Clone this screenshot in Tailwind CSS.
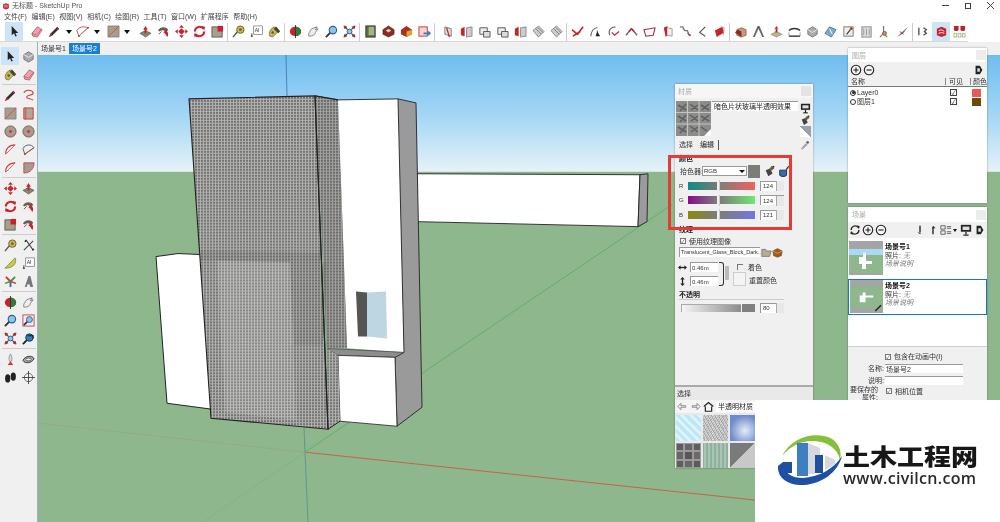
<!DOCTYPE html>
<html lang="zh">
<head>
<meta charset="utf-8">
<title>SketchUp Pro</title>
<script src="https://cdn.jsdelivr.net/npm/@tailwindcss/browser@4"></script>
</head>
<body class="bg-white">

<!-- icon set, every icon is drawn in a 14x14 box -->
<svg class="hidden" xmlns="http://www.w3.org/2000/svg">
  <symbol id="select" viewBox="0 0 14 14"><path d="M4 1v10l2.500-2 1.500 3.500 1.500-.7L8 8.500h3z" fill="#222"/></symbol>
  <symbol id="eraser" viewBox="0 0 14 14"><path d="M2 9l6-7 5 3-5 8-5-1z" fill="#eda2ae" stroke="#a8505f" stroke-width=".8"/><path d="M2 9l5 2 5-6" fill="none" stroke="#a8505f" stroke-width=".7"/></symbol>
  <symbol id="pencil" viewBox="0 0 14 14"><path d="M1 13l2-4 7-7 2 2-7 7z" fill="#333"/><path d="M1 13l2-4 2 2z" fill="#c22"/><path d="M9 3l2 2 1-1-2-2z" fill="#b33"/></symbol>
  <symbol id="arc" viewBox="0 0 14 14"><path d="M3 12L1 6c2-4 7-5 12-3z" fill="none" stroke="#b9505a" stroke-width="1"/><path d="M3 12l5-5 5-4" fill="none" stroke="#888" stroke-width=".8"/><circle cx="3" cy="12" r="1" fill="#d33"/><circle cx="13" cy="3" r="1" fill="#d33"/></symbol>
  <symbol id="arc2" viewBox="0 0 14 14"><path d="M2 12c-1-5 3-10 10-10" fill="none" stroke="#d3404a" stroke-width="1.200"/><path d="M2 12L12 2" stroke="#d3404a" stroke-width=".8"/></symbol>
  <symbol id="arc3" viewBox="0 0 14 14"><path d="M3 12L1 6c3-5 9-5 12-1z" fill="none" stroke="#2d6a68" stroke-width="1"/><path d="M3 12L13 5" stroke="#d3404a" stroke-width="1"/><circle cx="3" cy="12" r="1" fill="#d33"/></symbol>
  <symbol id="freehand" viewBox="0 0 14 14"><path d="M2 4c2-4 9-3 10 0 1 3-7 2-7 5 0 2 5 1 7 3" fill="none" stroke="#c8404a" stroke-width="1.200"/></symbol>
  <symbol id="pie" viewBox="0 0 14 14"><path d="M2 2h11c0 6-4 11-11 11z" fill="#a99a8c" stroke="#b9505a"/></symbol>
  <symbol id="rect" viewBox="0 0 14 14"><path d="M1 1h12v12H1z" fill="#a89c8d" stroke="#777" stroke-width=".7"/><path d="M1 13L13 1" stroke="#d3404a" stroke-width=".8"/></symbol>
  <symbol id="rect2" viewBox="0 0 14 14"><path d="M2 1h10v12H2z" fill="#b3a696" stroke="#c33" stroke-width="1"/><path d="M4 1v12" stroke="#c33" stroke-width=".7"/></symbol>
  <symbol id="circle" viewBox="0 0 14 14"><circle cx="7" cy="7" r="6" fill="#a99a8c" stroke="#6d5f52"/><circle cx="7" cy="7" r="1.500" fill="#c33"/></symbol>
  <symbol id="push" viewBox="0 0 14 14"><path d="M1 9l6-3 6 3-6 4z" fill="#7d8a70" stroke="#444" stroke-width=".6"/><path d="M7 9V4" stroke="#c22" stroke-width="2"/><path d="M4.500 5L7 1l2.500 4z" fill="#c22"/></symbol>
  <symbol id="follow" viewBox="0 0 14 14"><path d="M1 6c2-4 8-5 11-1l-2 3C8 5 5 5 3 7z" fill="#6b5b52"/><path d="M9 5c3 2 4 5 2 8-1-2-2-4-4-5z" fill="#c8232c"/><path d="M2 10l3-3" stroke="#c8232c"/></symbol>
  <symbol id="move" viewBox="0 0 14 14"><path d="M7 0l2.500 3h-5zM7 14l-2.500-3h5zM0 7l3-2.500v5zM14 7l-3-2.500v5z" fill="#d01e2a"/><rect x="4.500" y="4.500" width="5" height="5" fill="#d01e2a" transform="rotate(45 7 7)"/></symbol>
  <symbol id="rotate" viewBox="0 0 14 14"><path d="M2 7a5 5 0 0 1 9-3M12 7a5 5 0 0 1-9 3" fill="none" stroke="#d01e2a" stroke-width="2.200"/><path d="M9 1l4 1-1 4zM5 13l-4-1 1-4z" fill="#d01e2a"/></symbol>
  <symbol id="scale" viewBox="0 0 14 14"><rect x="1" y="2" width="11" height="11" fill="#a7a18c" stroke="#444" stroke-width=".8"/><rect x="7" y="1" width="6" height="6" fill="#d01e2a"/></symbol>
  <symbol id="tape" viewBox="0 0 14 14"><path d="M1 13l5-6" stroke="#555" stroke-width="1.500"/><circle cx="9" cy="5" r="4" fill="#c9b93c" stroke="#6c6a2a"/><circle cx="9" cy="5" r="1.500" fill="#7a4fa0"/></symbol>
  <symbol id="dim" viewBox="0 0 14 14"><path d="M2 12L12 2M5 2l7 10" stroke="#444" stroke-width="1.100"/><path d="M3 3l2-2M11 12l2-1" stroke="#222" stroke-width="1.500"/></symbol>
  <symbol id="protractor" viewBox="0 0 14 14"><path d="M1 12L12 1c2 5-1 11-11 11z" fill="#c7cc4e" stroke="#7d8030" stroke-width=".8"/></symbol>
  <symbol id="text" viewBox="0 0 14 14"><rect x="4" y="1" width="9.500" height="9" fill="#fff" stroke="#666" stroke-width=".7"/><path d="M2 9v4M1 12h2" stroke="#333"/><text x="5" y="8" font-size="5.500" fill="#333" font-family="Liberation Sans">AI</text></symbol>
  <symbol id="axes" viewBox="0 0 14 14"><path d="M7 7L2 2" stroke="#d33" stroke-width="2"/><path d="M7 7l5-5" stroke="#3a9a4a" stroke-width="2"/><path d="M7 7v6" stroke="#3566c8" stroke-width="2"/><path d="M7 7L1 9" stroke="#3a9a4a" stroke-width="1.500"/><path d="M7 7l6 2" stroke="#d33" stroke-width="1.500"/></symbol>
  <symbol id="text3d" viewBox="0 0 14 14"><path d="M3 13L7 1h2l3 12H9l-1-3H6l-1 3z" fill="#777"/></symbol>
  <symbol id="paint" viewBox="0 0 14 14"><path d="M2 12c-2-4 1-9 6-10l4 4-7 7z" fill="#c9b93c" stroke="#555" stroke-width=".7"/><path d="M6 4l5 5 2-2-4-5z" fill="#444"/><circle cx="5" cy="8" r="1.300" fill="#555"/></symbol>
  <symbol id="orbit" viewBox="0 0 14 14"><path d="M7 2c3 0 6 2 6 5s-3 5-6 5-6-2-6-5 3-5 6-5z" fill="#c4232b"/><path d="M7 2c3 0 6 2 6 5s-3 5-6 5z" fill="#2e7c3e"/><path d="M7 0v14" stroke="#333"/></symbol>
  <symbol id="pan" viewBox="0 0 14 14"><path d="M2 12c-1-3 1-5 3-8l6-2-2 3 3-1-3 4c0 2-2 4-7 4z" fill="#eee" stroke="#555" stroke-width=".7"/></symbol>
  <symbol id="zoom" viewBox="0 0 14 14"><path d="M1 13l5-5" stroke="#333" stroke-width="2"/><circle cx="8.500" cy="5.500" r="4" fill="#8fc5e8" stroke="#2f5f92" stroke-width="1.200"/></symbol>
  <symbol id="zoomwin" viewBox="0 0 14 14"><rect x="1" y="1" width="12" height="12" fill="none" stroke="#d3404a"/><path d="M2 12l4-4" stroke="#333" stroke-width="1.800"/><circle cx="8" cy="6" r="3.200" fill="#8fc5e8" stroke="#2f5f92"/></symbol>
  <symbol id="zoomext" viewBox="0 0 14 14"><path d="M1 1l3 1-2 2zM13 1l-1 3-2-2zM1 13l1-3 2 2zM13 13l-3-1 2-2z" fill="#c22" stroke="#c22"/><path d="M2 2l3 3M12 2L9 5M2 12l3-3M12 12L9 9" stroke="#444" stroke-width="1.300"/><circle cx="7" cy="7" r="2.600" fill="#8fc5e8" stroke="#2f5f92"/></symbol>
  <symbol id="prev" viewBox="0 0 14 14"><path d="M1 13l5-5" stroke="#222" stroke-width="2"/><circle cx="8" cy="6" r="4" fill="#2d80c0" stroke="#234"/><path d="M6 4h6v3" fill="none" stroke="#123" stroke-width="1.200"/></symbol>
  <symbol id="walk" viewBox="0 0 14 14"><ellipse cx="4" cy="8" rx="2.800" ry="4.500" fill="#222"/><ellipse cx="10" cy="6" rx="2.800" ry="4.500" fill="#222"/></symbol>
  <symbol id="look" viewBox="0 0 14 14"><circle cx="7" cy="7" r="4.500" fill="#f2f2f2" stroke="#666"/><path d="M7 0v14M0 7h14" stroke="#444"/></symbol>
  <symbol id="position" viewBox="0 0 14 14"><path d="M7 1c2 3 2 6 1 8H6C5 7 5 4 7 1z" fill="#ddd" stroke="#777" stroke-width=".7"/><path d="M4 13l3-4 3 4z" fill="#d33"/></symbol>
  <symbol id="section" viewBox="0 0 14 14"><path d="M1 8c2-5 10-6 12-2-2 5-10 6-12 2z" fill="#aaa" stroke="#333"/><ellipse cx="7" cy="7" rx="3" ry="1.500" fill="#eee" stroke="#333" stroke-width=".7"/></symbol>
  <symbol id="book" viewBox="0 0 14 14"><rect x="2" y="1" width="10" height="12" fill="#5d7040" stroke="#333"/><rect x="5" y="2" width="6" height="9" fill="#a8b47f"/></symbol>
  <symbol id="cube-r" viewBox="0 0 14 14"><path d="M7 1l6 4v5l-6 3-6-3V5z" fill="#8c2a24" stroke="#4d1613" stroke-width=".6"/><path d="M4 6l3 2 3-2-3-2z" fill="#e3d7a2"/></symbol>
  <symbol id="cube-o" viewBox="0 0 14 14"><path d="M7 1l6 4v5l-6 3-6-3V5z" fill="#a53127"/><path d="M7 7l6-2v5l-6 3z" fill="#d9a82c"/></symbol>
  <symbol id="export" viewBox="0 0 14 14"><rect x="1" y="2" width="9" height="10" fill="#f3d5d5" stroke="#c33"/><path d="M6 8h5V6l3 3-3 3v-2H6z" fill="#2d7fc0"/></symbol>
  <symbol id="solid1" viewBox="0 0 14 14"><path d="M3 2l7 2v8l-7-2z" fill="#ddd" stroke="#555" stroke-width=".7"/><path d="M5 3l3 10" stroke="#c22" stroke-width="1.300"/></symbol>
  <symbol id="solid2" viewBox="0 0 14 14"><path d="M1 4l4-2v10l-4-1z" fill="#c22"/><path d="M7 3l6-1v10l-6 1z" fill="#ccc" stroke="#555" stroke-width=".6"/></symbol>
  <symbol id="solid3" viewBox="0 0 14 14"><path d="M2 3h8v7H2z" fill="#eee" stroke="#555"/><path d="M6 7h7v6H6z" fill="#ddd" stroke="#555"/></symbol>
  <symbol id="stack" viewBox="0 0 14 14"><path d="M1 6l6-5 6 6-6 6z" fill="#ccc" stroke="#666" stroke-width=".7"/><path d="M4 4l6 6M6 2.500l6 6" stroke="#666" stroke-width=".7"/></symbol>
  <symbol id="line-r" viewBox="0 0 14 14"><path d="M1 5l6 5 6-8M2 12l8-5" fill="none" stroke="#c8232c" stroke-width="1.800"/></symbol>
  <symbol id="arrow-g" viewBox="0 0 14 14"><path d="M2 12c0-5 3-9 7-9M9 6v6" fill="none" stroke="#666" stroke-width="1.200"/><path d="M7 12l2-5 3 5z" fill="#222"/></symbol>
  <symbol id="check-r" viewBox="0 0 14 14"><path d="M3 11C1 6 4 2 9 2" fill="none" stroke="#666" stroke-width="1.200"/><path d="M5 8l3 3 5-4" fill="none" stroke="#c8232c" stroke-width="1.300"/></symbol>
  <symbol id="roof" viewBox="0 0 14 14"><path d="M1 11l6-7 6 7" fill="none" stroke="#666" stroke-width="1.500"/><path d="M4 7l3-3 3 3" fill="none" stroke="#c8232c" stroke-width="1.500"/></symbol>
  <symbol id="plane" viewBox="0 0 14 14"><path d="M1 5l12-2-2 8-8 1z" fill="#fff" stroke="#a8232c" stroke-width="1.100"/></symbol>
  <symbol id="red-fold" viewBox="0 0 14 14"><path d="M3 3l4-2v10l-2 2z" fill="#c8232c"/><path d="M7 3l5 1v8l-5-1" fill="#eee" stroke="#777" stroke-width=".7"/></symbol>
  <symbol id="steps" viewBox="0 0 14 14"><path d="M1 2h3l2 4h3l2 5h2" fill="none" stroke="#777" stroke-width="1.500"/><path d="M9 9l3 2" stroke="#c8232c"/></symbol>
  <symbol id="lt" viewBox="0 0 14 14"><path d="M10 2L4 8l6 4" fill="none" stroke="#555" stroke-width="1.300"/></symbol>
  <symbol id="redcard" viewBox="0 0 14 14"><path d="M2 6l8-4 2 6-8 5z" fill="#c8232c"/><path d="M9 2l3 1-1 8" fill="none" stroke="#999"/></symbol>
  <symbol id="house" viewBox="0 0 14 14"><path d="M3 5l5-2 5 2v6l-5 2-5-2z" fill="#c79a78" stroke="#6d4c35" stroke-width=".7"/><path d="M1 8l3-3 4 2v6z" fill="#8c2a24"/></symbol>
  <symbol id="hill" viewBox="0 0 14 14"><path d="M1 13L6 1h2l5 12h-2L7 4l-4 9z" fill="#666"/></symbol>
  <symbol id="mound" viewBox="0 0 14 14"><path d="M1 10l6-3 6 3-6 3z" fill="#b8b68a" stroke="#666" stroke-width=".5"/><path d="M7 8V4" stroke="#c22" stroke-width="2"/><path d="M5 4l2-3 2 3z" fill="#c22"/></symbol>
  <symbol id="bridge" viewBox="0 0 14 14"><path d="M1 6c3-3 9-3 12 0" fill="none" stroke="#333" stroke-width="1.500"/><path d="M1 12h12" stroke="#333" stroke-width="1.500"/><path d="M1 8v4M13 8v4" stroke="#999"/></symbol>
  <symbol id="gem" viewBox="0 0 14 14"><path d="M2 5l5-3 5 3v5l-5 3-5-3z" fill="#aaa" stroke="#777"/><path d="M2 5l5 3 5-3" fill="none" stroke="#eee"/></symbol>
  <symbol id="map" viewBox="0 0 14 14"><path d="M1 9l5-7 7 3-5 8z" fill="#7aa9dc" stroke="#355" stroke-width=".7"/><path d="M6 4l3 6" stroke="#fff"/></symbol>
  <symbol id="photo" viewBox="0 0 14 14"><rect x="2" y="2" width="10" height="10" fill="#eee" stroke="#777"/><path d="M5 10l4-5" stroke="#333" stroke-width="1.200"/><circle cx="10" cy="4" r="1.500" fill="#c22"/></symbol>
  <symbol id="pages" viewBox="0 0 14 14"><rect x="2" y="2" width="10" height="11" fill="#ddd" stroke="#888"/><path d="M4 4v7M7 4v7M10 4v7" stroke="#999"/></symbol>
  <symbol id="probe" viewBox="0 0 14 14"><path d="M6 1v8M2 13l4-4 4 4" fill="none" stroke="#777" stroke-width="1.300"/><circle cx="7" cy="9" r="2" fill="#d69a3c" stroke="#844"/></symbol>
  <symbol id="tube" viewBox="0 0 14 14"><path d="M1 13l4-4 8-7-5 7z" fill="#777"/><path d="M4 7l4 3" stroke="#c22"/></symbol>
  <symbol id="bars" viewBox="0 0 14 14"><path d="M2 3v8M7 3l3 2-2 2 2 2-3 2" fill="none" stroke="#555" stroke-width="1.500"/></symbol>
  <symbol id="su" viewBox="0 0 14 14"><path d="M2 4l5-2 5 2v7l-5 2-5-2z" fill="#c8232c"/><path d="M4 6c2-1 4-1 6 1M4 9c2-1 4-1 6 0" fill="none" stroke="#fff"/></symbol>
  <symbol id="su2" viewBox="0 0 14 14"><path d="M1 1h5v4c0 2-5 2-5 0zM8 1h5v4c0 2-5 2-5 0z" fill="#b9242c"/><path d="M1 9h3v4H1zM5.500 9h3v4h-3zM10 9h3v4h-3z" fill="none" stroke="#8a6" stroke-width=".8"/></symbol>
  <symbol id="plus" viewBox="0 0 14 14"><circle cx="7" cy="7" r="5.500" fill="#f4f4f4" stroke="#222" stroke-width="1.300"/><path d="M4 7h6M7 4v6" stroke="#222" stroke-width="1.300"/></symbol>
  <symbol id="minus" viewBox="0 0 14 14"><circle cx="7" cy="7" r="5.500" fill="#f4f4f4" stroke="#222" stroke-width="1.300"/><path d="M4 7h6" stroke="#222" stroke-width="1.300"/></symbol>
  <symbol id="refresh" viewBox="0 0 14 14"><path d="M2.500 7a4.500 4.500 0 0 1 8-3M11.500 7a4.500 4.500 0 0 1-8 3" fill="none" stroke="#222" stroke-width="1.500"/><path d="M9 1.500l3.500 1-1 3.500zM5 12.500l-3.500-1 1-3.500z" fill="#222"/></symbol>
  <symbol id="detail" viewBox="0 0 14 14"><path d="M3 2h5l3 5-3 5H3z" fill="#222"/><rect x="5" y="5" width="3" height="4" fill="#ddd"/></symbol>
  <symbol id="down" viewBox="0 0 14 14"><path d="M7 2v8" stroke="#222" stroke-width="1.600"/><path d="M4 9l3 3 1-1z" fill="#222"/></symbol>
  <symbol id="up" viewBox="0 0 14 14"><path d="M7 4v8" stroke="#222" stroke-width="1.600"/><path d="M7 2l3 3-4 0z" fill="#222"/></symbol>
  <symbol id="listview" viewBox="0 0 14 14"><path d="M1 2h5v4H1zM1 8h5v4H1z" fill="#eee" stroke="#555"/><path d="M8 3h5M8 5h5M8 9h5M8 11h5" stroke="#555"/></symbol>
  <symbol id="monitor" viewBox="0 0 14 14"><rect x="1" y="1" width="12" height="8" fill="#222"/><rect x="3" y="3" width="8" height="4" fill="#ddd"/><path d="M7 9v3M4 13h6" stroke="#222" stroke-width="1.500"/></symbol>
  <symbol id="dropper" viewBox="0 0 14 14"><path d="M2 12l6-7 2 2-7 6z" fill="#aab" stroke="#778" stroke-width=".6"/><path d="M8 3l3 3 2-3-2-2z" fill="#667"/></symbol>
  <symbol id="bucket" viewBox="0 0 14 14"><path d="M2 6l5-2 3 6-5 3z" fill="#444"/><path d="M9 1l3 3-4 3-2-2z" fill="#6b5b4b"/><circle cx="11" cy="2" r="1.200" fill="#333"/></symbol>
  <symbol id="bucket2" viewBox="0 0 14 14"><path d="M2 6h8v6c-2 2-6 2-8 0z" fill="#2f6fb0" stroke="#223"/><path d="M9 5l3-4 1 1-3 4z" fill="#333"/></symbol>
  <symbol id="folder" viewBox="0 0 14 14"><path d="M1 3h5l1 2h6l-2 7H1z" fill="#b7ab93" stroke="#555" stroke-width=".7"/></symbol>
  <symbol id="box" viewBox="0 0 14 14"><path d="M7 2l6 3-1 6-5 2-5-2-1-6z" fill="#a55a18" stroke="#442" stroke-width=".6"/><path d="M1 5l6 3 6-3" fill="none" stroke="#e8a050"/></symbol>
  <symbol id="hollow-l" viewBox="0 0 14 14"><path d="M5 3v3h6v2H5v3L1 7z" fill="#eee" stroke="#777"/></symbol>
  <symbol id="hollow-r" viewBox="0 0 14 14"><path d="M9 3v3H3v2h6v3l4-4z" fill="#eee" stroke="#777"/></symbol>
  <symbol id="home" viewBox="0 0 14 14"><path d="M1 7l6-5 6 5" fill="none" stroke="#222" stroke-width="1.600"/><path d="M3 7v6h8V7" fill="none" stroke="#222" stroke-width="1.500"/></symbol>
  <symbol id="hsize" viewBox="0 0 14 14"><path d="M3 7h8" stroke="#222" stroke-width="2"/><path d="M0 7l4-3.500v7zM14 7l-4-3.500v7z" fill="#222"/></symbol>
  <symbol id="vsize" viewBox="0 0 14 14"><path d="M7 3v8" stroke="#222" stroke-width="2"/><path d="M7 0l3.500 4h-7zM7 14l3.500-4h-7z" fill="#222"/></symbol>
</svg>

<div class="relative w-[1000px] h-[522px] overflow-hidden flex flex-col bg-white text-[7px] leading-none text-[#333] blur-[0.35px] font-['Liberation_Sans','Noto_Sans_CJK_SC',sans-serif]">

  <!-- title bar -->
  <div class="h-[11px] flex items-center pl-[2px] bg-white">
    <svg class="w-[8px] h-[8px]" viewBox="0 0 14 14"><use href="#su"/></svg>
    <span class="ml-[2px] text-[7px] text-[#555]">无标题 - SketchUp Pro</span>
    <div class="ml-auto flex items-center gap-[16px] pr-[6px] text-[#444]">
      <div class="w-[7px] h-px bg-[#444]"></div>
      <div class="w-[6px] h-[6px] border border-[#444]"></div>
      <svg class="w-[7px] h-[7px]" viewBox="0 0 7 7"><path d="M0 0l7 7M7 0L0 7" stroke="#444"/></svg>
    </div>
  </div>

  <!-- menu bar -->
  <div class="h-[11px] flex items-center gap-[4.500px] pl-[4px] text-[#444]">
    <span>文件(F)</span><span>编辑(E)</span><span>视图(V)</span><span>相机(C)</span><span>绘图(R)</span><span>工具(T)</span><span>窗口(W)</span><span>扩展程序</span><span>帮助(H)</span>
  </div>

  <!-- main toolbar -->
  <div class="h-[20px] w-[968px] flex items-center pl-[5px] bg-white border-b border-[#d8d8d8] [&_svg]:w-[13px] [&_svg]:h-[13px] [&>span]:w-[18px] [&>span]:shrink-0 [&>span]:h-[19px] [&>span]:flex [&>span]:items-center [&>span]:justify-center [&>i]:w-px [&>i]:shrink-0 [&>i]:h-[18px] [&>i]:bg-[#ccc] [&>i]:mx-[1px]">
    <span class="bg-[#cde4f7]"><svg><use href="#select"/></svg></span>
    <span class="ml-[4px]"><svg><use href="#eraser"/></svg></span>
    <span><svg><use href="#pencil"/></svg></span>
    <b class="w-0 h-0 shrink-0 ml-[3px] border-x-[3px] border-t-[4px] border-x-transparent border-t-[#111]"></b>
    <span class="ml-[1px]"><svg><use href="#arc"/></svg></span>
    <b class="w-0 h-0 shrink-0 ml-[3px] border-x-[3px] border-t-[4px] border-x-transparent border-t-[#111]"></b>
    <span class="ml-[4px]"><svg><use href="#rect"/></svg></span>
    <b class="w-0 h-0 shrink-0 ml-[2px] border-x-[3px] border-t-[4px] border-x-transparent border-t-[#111]"></b>
    <span class="ml-[6px]"><svg><use href="#push"/></svg></span>
    <span><svg><use href="#follow"/></svg></span>
    <span><svg><use href="#move"/></svg></span>
    <span><svg><use href="#rotate"/></svg></span>
    <span><svg><use href="#scale"/></svg></span>
    <i></i>
    <span><svg><use href="#tape"/></svg></span>
    <span><svg><use href="#text"/></svg></span>
    <span><svg><use href="#paint"/></svg></span>
    <i></i>
    <span><svg><use href="#orbit"/></svg></span>
    <span><svg><use href="#pan"/></svg></span>
    <span><svg><use href="#zoom"/></svg></span>
    <span><svg><use href="#zoomext"/></svg></span>
    <i></i>
    <span><svg><use href="#book"/></svg></span>
    <span><svg><use href="#cube-r"/></svg></span>
    <span><svg><use href="#cube-o"/></svg></span>
    <span><svg><use href="#export"/></svg></span>
    <i></i>
    <span class="ml-[3px]"><svg><use href="#solid1"/></svg></span>
    <span><svg><use href="#solid2"/></svg></span>
    <span><svg><use href="#solid3"/></svg></span>
    <span><svg><use href="#solid3"/></svg></span>
    <span><svg><use href="#solid2"/></svg></span>
    <span><svg><use href="#stack"/></svg></span>
    <span><svg><use href="#stack"/></svg></span>
    <i></i>
    <span><svg><use href="#line-r"/></svg></span>
    <span><svg><use href="#arrow-g"/></svg></span>
    <span><svg><use href="#check-r"/></svg></span>
    <span><svg><use href="#roof"/></svg></span>
    <span><svg><use href="#plane"/></svg></span>
    <span><svg><use href="#red-fold"/></svg></span>
    <span><svg><use href="#steps"/></svg></span>
    <span class="-ml-[1px]"><svg><use href="#lt"/></svg></span>
    <span class="-ml-[1px]"><svg><use href="#redcard"/></svg></span>
    <i class="ml-[3px]"></i>
    <span><svg><use href="#house"/></svg></span>
    <span><svg><use href="#hill"/></svg></span>
    <span><svg><use href="#mound"/></svg></span>
    <span><svg><use href="#bridge"/></svg></span>
    <span><svg><use href="#gem"/></svg></span>
    <span><svg><use href="#map"/></svg></span>
    <span><svg><use href="#photo"/></svg></span>
    <span><svg><use href="#pages"/></svg></span>
    <span><svg><use href="#probe"/></svg></span>
    <span><svg><use href="#tube"/></svg></span>
    <i></i>
    <span><svg><use href="#bars"/></svg></span>
    <span class="bg-[#cde4f7]"><svg><use href="#su"/></svg></span>
    <span><svg><use href="#su2"/></svg></span>
  </div>

  <div class="flex-1 flex min-h-0">
    <!-- left toolbar -->
    <aside class="w-[38px] bg-[#f0f0f0] pt-[5px] pl-[1px] border-r border-[#9fb0b8] [&_svg]:w-[13px] [&_svg]:h-[13px] [&_span]:w-[18px] [&_span]:h-[18px] [&_span]:flex [&_span]:items-center [&_span]:justify-center [&_div]:grid [&_div]:grid-cols-2 [&_div]:w-[36px] [&_hr]:border-[#ccc] [&_hr]:my-[1px] [&_hr]:mx-[1px]">
      <div>
        <span class="bg-[#cde4f7]"><svg><use href="#select"/></svg></span><span><svg><use href="#gem"/></svg></span>
        <span><svg><use href="#paint"/></svg></span><span><svg><use href="#eraser"/></svg></span>
      </div>
      <hr>
      <div>
        <span><svg><use href="#pencil"/></svg></span><span><svg><use href="#freehand"/></svg></span>
        <span><svg><use href="#rect"/></svg></span><span><svg><use href="#rect2"/></svg></span>
        <span><svg><use href="#circle"/></svg></span><span><svg><use href="#circle"/></svg></span>
        <span><svg><use href="#arc2"/></svg></span><span><svg><use href="#arc3"/></svg></span>
        <span><svg><use href="#arc2"/></svg></span><span><svg><use href="#pie"/></svg></span>
      </div>
      <hr>
      <div>
        <span><svg><use href="#move"/></svg></span><span><svg><use href="#push"/></svg></span>
        <span><svg><use href="#rotate"/></svg></span><span><svg><use href="#follow"/></svg></span>
        <span><svg><use href="#scale"/></svg></span><span><svg><use href="#follow"/></svg></span>
      </div>
      <hr>
      <div>
        <span><svg><use href="#tape"/></svg></span><span><svg><use href="#dim"/></svg></span>
        <span><svg><use href="#protractor"/></svg></span><span><svg><use href="#text"/></svg></span>
        <span><svg><use href="#axes"/></svg></span><span><svg><use href="#text3d"/></svg></span>
      </div>
      <hr>
      <div>
        <span><svg><use href="#orbit"/></svg></span><span><svg><use href="#pan"/></svg></span>
        <span><svg><use href="#zoom"/></svg></span><span><svg><use href="#zoomwin"/></svg></span>
        <span><svg><use href="#zoomext"/></svg></span><span><svg><use href="#prev"/></svg></span>
      </div>
      <hr>
      <div>
        <span><svg><use href="#position"/></svg></span><span><svg><use href="#section"/></svg></span>
        <span><svg><use href="#walk"/></svg></span><span><svg><use href="#look"/></svg></span>
      </div>
    </aside>

    <main class="flex-1 flex flex-col min-w-0">
      <!-- scene tabs -->
      <div class="h-[13px] flex items-center gap-[3px] pl-[3px] bg-[#f0f0f0]">
        <span class="text-[#333]">场景号1</span>
        <span class="bg-[#1a7fd4] text-white px-[3px] py-[2px]">场景号2</span>
      </div>

      <!-- model viewport -->
      <svg class="flex-1 w-full block" viewBox="38 54 962 468" preserveAspectRatio="none" xmlns="http://www.w3.org/2000/svg">
        <defs>
          <linearGradient id="sky" x1="0" y1="0" x2="0" y2="1">
            <stop offset="0" stop-color="#6fbdf0"/><stop offset=".55" stop-color="#a8d8f5"/><stop offset="1" stop-color="#e6f3f8"/>
          </linearGradient>
          <pattern id="glass" width="3" height="3" patternUnits="userSpaceOnUse">
            <rect width="3" height="3" fill="#b0b0ae"/><rect width="2" height="2" fill="#747472"/>
          </pattern>
          <pattern id="glass2" width="3" height="3" patternUnits="userSpaceOnUse">
            <rect width="3" height="3" fill="#a0a09e"/><rect width="2" height="2" fill="#6c6c6a"/>
          </pattern>
        </defs>
        <rect x="38" y="54" width="962" height="117" fill="url(#sky)"/>
        <rect x="38" y="171" width="962" height="351" fill="#8fb78d"/>

        <!-- axes -->
        <path d="M286 54L287 96" stroke="#3f6fb0" stroke-width=".8"/>
        <path d="M304 428L305 452L308 522" stroke="#4a8a98" stroke-width=".7"/>
        <path d="M305 452L755 500" stroke="#c8604a" stroke-width="1"/>
        <path d="M305 452L38 423" stroke="#a08a70" stroke-width=".6" opacity=".5"/>
        <path d="M305 452L672 204" stroke="#5cae60" stroke-width=".9"/>
        <path d="M305 452L203 522" stroke="#7fb088" stroke-width=".7"/>

        <!-- long bar behind the block -->
        <path d="M417 173L640 174L638 226L417 221Z" fill="#fff" stroke="#222" stroke-width=".9"/>
        <path d="M640 174L648 173L647 221L638 226Z" fill="#9b9b9f" stroke="#222" stroke-width=".9"/>

        <!-- left low block -->
        <path d="M156 256L178 253L202 254L212 409L167 403Z" fill="#fff" stroke="#222" stroke-width="1"/>

        <!-- tall block -->
        <path d="M338 99L398 98L404 352L347 348Z" fill="#fff"/>
        <path d="M398 98L416 102L422 407L397 426L395 357L404 352Z" fill="#9a9a9a" stroke="#222" stroke-width=".9"/>
        <path d="M315 95L338 99L398 98" fill="none" stroke="#222" stroke-width=".9"/>
        <path d="M356 291L367 292L367 336L358 336Z" fill="#555553"/>
        <path d="M367 292L386 291L387 338L367 336Z" fill="#bdd6e2"/>
        <path d="M327 348L404 352L395 357L338 355Z" fill="#8d8d8d" stroke="#333" stroke-width=".6"/>
        <path d="M338 355L395 357L397 426L340 421Z" fill="#fff" stroke="#222" stroke-width=".8"/>

        <!-- translucent glass skin -->
        <path d="M315 95L338 99L347 348L327 348Z" fill="url(#glass2)"/>
        <path d="M327 348L338 355L340 421L328 429Z" fill="url(#glass)"/>
        <path d="M189 98L315 95L328 429L211 418Z" fill="url(#glass)" stroke="#222" stroke-width="1.100"/>
        <path d="M217 260L290 262L296 420L225 412Z" fill="#fff" opacity=".13"/>
        <path d="M290 262L327 262L327 345L294 345Z" fill="#000" opacity=".06"/>
        <path d="M200 250L322 252L320 262L200 260Z" fill="#000" opacity=".08"/>
        <path d="M315 95L328 429" stroke="#222" stroke-width="1.100"/>
        <path d="M315 95L338 99" stroke="#222" stroke-width="1.100"/>
        <path d="M328 429L340 421" stroke="#222" stroke-width="1"/>
      </svg>
    </main>
  </div>

  <!-- material tray window -->
  <section class="absolute left-[675px] top-[84px] w-[138px] h-[384px] bg-[#f0f0f0] flex flex-col shadow-[0_0_2px_rgba(0,0,0,.35)]">
    <div class="h-[14px] shrink-0 flex items-center justify-between pl-[3px] pr-[2px] bg-[#f6f6f6] text-[#aaa]"><span>材质</span><div class="w-[10px] h-[10px] bg-[#e4e4e4]"></div></div>
    <div class="h-[39px] shrink-0 flex pl-[1px] pt-[3px]">
      <svg class="w-[35px] h-[35px] shrink-0" viewBox="0 0 35 35">
        <rect width="35" height="35" fill="#8c8c8a"/>
        <path d="M2 4l8 5M4 10l6-7M14 3l8 6M15 9l7-5M25 4l8 5M26 9l7-6M2 15l8 5M4 21l6-7M14 14l8 6M15 20l7-5M25 15l8 5M26 20l7-6M2 26l8 5M4 32l6-7M14 25l8 6M15 31l7-5M25 26l6 4" stroke="#5f5f5d" stroke-width="1.500"/>
        <path d="M0 11.500h35M0 23h35M11.500 0v35M23 0v35" stroke="#c4c4c2" stroke-width="1"/>
        <path d="M28 35l7-7v7z" fill="#fff"/>
      </svg>
      <div class="ml-px w-[86px] h-[10px] bg-white border-t border-[#999] flex items-center pl-[2px] text-[#222] whitespace-nowrap">暗色片状玻璃半透明效果</div>
      <div class="ml-[2px] w-[11px] flex flex-col items-center gap-[1px] pt-[2px] [&_svg]:w-[11px] [&_svg]:h-[11px]">
        <svg><use href="#monitor"/></svg>
        <svg><use href="#bucket"/></svg>
        <div class="w-[11px] h-[11px] bg-[linear-gradient(45deg,#fff_50%,#9aa3ad_50%)]"></div>
      </div>
    </div>
    <div class="h-[15px] shrink-0 flex items-center pl-[3px] pr-[3px]">
      <span class="w-[21px] pl-[1px]">选择</span><span class="w-[20px] pl-[1px] pr-[3px] border-r border-[#555] h-[10px] flex items-center whitespace-nowrap text-[#222]">编辑</span>
      <svg class="ml-auto w-[10px] h-[10px]"><use href="#dropper"/></svg>
    </div>
    <div class="pl-[4px] h-[12px] shrink-0 flex items-center font-bold text-[#222]">颜色</div>
    <div class="h-[14px] shrink-0 flex items-center pl-[5px]">
      <span class="w-[22px] whitespace-nowrap">拾色器:</span>
      <div class="w-[45px] h-[10px] bg-white border border-[#999] flex items-center justify-between pl-[1px] pr-[1px] text-[6px]">RGB<b class="w-0 h-0 border-x-[3px] border-t-[3px] border-x-transparent border-t-[#111]"></b></div>
      <div class="ml-[1px] w-[12px] h-[13px] bg-[#7c7c79]"></div>
      <svg class="ml-[4px] w-[12px] h-[12px]"><use href="#bucket"/></svg>
      <svg class="ml-[2px] w-[12px] h-[12px]"><use href="#bucket2"/></svg>
    </div>
    <!-- colour sliders -->
    <div class="h-[15px] shrink-0 flex items-center pl-[4px] text-[6px]">
      <span class="w-[9px]">R</span>
      <div class="w-[29px] h-[8px] bg-[linear-gradient(90deg,#0f8c83,#757a78)]"></div><div class="w-[3px] h-[11px] border-r border-[#ccc]"></div>
      <div class="w-[35px] h-[8px] bg-[linear-gradient(90deg,#857b7b,#f0625f)]"></div>
      <div class="ml-[5px] w-[24px] h-[10px] bg-white border-l border-t border-[#999] flex items-center justify-between pl-[2px]">124<b class="w-[8px] h-[10px] bg-[#e8e8e8] border-l border-[#aaa]"></b></div>
    </div>
    <div class="h-[14px] shrink-0 flex items-center pl-[4px] text-[6px]">
      <span class="w-[9px]">G</span>
      <div class="w-[29px] h-[8px] bg-[linear-gradient(90deg,#8a0a8a,#7c7c7c)]"></div><div class="w-[3px] h-[11px] border-r border-[#ccc]"></div>
      <div class="w-[35px] h-[8px] bg-[linear-gradient(90deg,#7c7c7c,#6fe86f)]"></div>
      <div class="ml-[5px] w-[24px] h-[10px] bg-white border-l border-t border-[#999] flex items-center justify-between pl-[2px]">124<b class="w-[8px] h-[10px] bg-[#e8e8e8] border-l border-[#aaa]"></b></div>
    </div>
    <div class="h-[15px] shrink-0 flex items-center pl-[4px] text-[6px]">
      <span class="w-[9px]">B</span>
      <div class="w-[29px] h-[8px] bg-[linear-gradient(90deg,#8a8a10,#7c7c7c)]"></div><div class="w-[3px] h-[11px] border-r border-[#ccc]"></div>
      <div class="w-[35px] h-[8px] bg-[linear-gradient(90deg,#7c7c7c,#7676e8)]"></div>
      <div class="ml-[5px] w-[24px] h-[10px] bg-white border-l border-t border-[#999] flex items-center justify-between pl-[2px]">121<b class="w-[8px] h-[10px] bg-[#e8e8e8] border-l border-[#aaa]"></b></div>
    </div>
    <div class="h-[14px] shrink-0 pl-[4px] flex items-center font-bold text-[#222]">纹理</div>
    <div class="h-[10px] shrink-0 pl-[5px] flex items-center gap-[3px]">
      <span class="w-[6px] h-[6px] bg-white border border-[#777] text-[5px] flex items-center justify-center">✓</span><span>使用纹理图像</span>
    </div>
    <div class="h-[12px] shrink-0 pl-[4px] flex items-center">
      <div class="w-[81px] h-[10px] bg-white border-t border-l border-[#999] flex items-center pl-[1px] text-[5.500px] whitespace-nowrap">Translucent_Glass_Block_Dark..</div>
      <svg class="ml-[1px] w-[11px] h-[11px]"><use href="#folder"/></svg>
      <svg class="w-[11px] h-[11px]"><use href="#box"/></svg>
    </div>
    <div class="h-[31px] shrink-0 flex pl-[3px] pt-[4px]">
      <div class="w-[40px] flex flex-col gap-[4px]">
        <div class="flex items-center gap-[3px]"><svg class="w-[9px] h-[9px]"><use href="#hsize"/></svg><div class="w-[28px] h-[10px] bg-white border-t border-l border-[#999] pl-[1px] flex items-center text-[6px]">0.46m</div></div>
        <div class="flex items-center gap-[3px]"><svg class="w-[9px] h-[9px]"><use href="#vsize"/></svg><div class="w-[28px] h-[10px] bg-white border-t border-l border-[#999] pl-[1px] flex items-center text-[6px]">0.46m</div></div>
      </div>
      <div class="ml-[1px] h-[24px] w-[5px] border-r border-y border-[#333] rounded-r-[3px]"></div>
      <div class="ml-[1px] mt-[4px] w-[4px] h-[14px] bg-[#bbb] rounded-[1px]"></div>
      <div class="ml-[4px] flex flex-col">
        <div class="flex items-center pl-[4px] h-[10px]"><span class="w-[6px] h-[6px] border-l border-t border-[#777]"></span><span class="ml-[5px]">着色</span></div>
        <div class="flex items-end gap-[3px]"><div class="w-[13px] h-[14px] bg-[#f4f4f4] border border-[#ccc]"></div><span class="mb-[2px]">重置颜色</span></div>
      </div>
    </div>
    <div class="h-[10px] shrink-0 pl-[4px] flex items-center font-bold text-[#222]">不透明</div>
    <div class="mx-[4px] w-[105px] shrink-0 border-t border-[#ccc]"></div>
    <div class="h-[15px] shrink-0 pl-[6px] flex items-center">
      <div class="w-[60px] h-[8px] bg-[linear-gradient(90deg,#f5f5f5,#8c8c8c)] border-l border-t border-[#aaa]"></div>
      <div class="ml-[1px] w-[13px] h-[8px] bg-[#808080]"></div>
      <div class="ml-[5px] w-[24px] h-[10px] bg-white border-l border-t border-[#999] flex items-center justify-between pl-[2px] text-[6px]">80<b class="w-[8px] h-[10px] bg-[#e8e8e8] border-l border-[#aaa]"></b></div>
    </div>
    <div class="flex-1"></div>
    <div class="border-t-2 border-[#aaa] h-[83px] shrink-0 flex flex-col bg-[#e9e9e9]">
      <div class="h-[13px] pl-[2px] flex items-center">选择</div>
      <div class="h-[13px] pl-[1px] flex items-center bg-[#f4f4f4] [&_svg]:w-[11px] [&_svg]:h-[11px]">
        <svg class="ml-[1px]"><use href="#hollow-l"/></svg><svg class="ml-[2px]"><use href="#hollow-r"/></svg><svg class="ml-[2px]"><use href="#home"/></svg>
        <div class="ml-[2px] w-[85px] h-[10px] bg-white flex items-center pl-[2px] text-[#222]">半透明材质</div>
      </div>
      <div class="mt-[2px] ml-[1px] grid grid-cols-[25px_25px_25px] grid-rows-[26px_25px] gap-[2px]">
        <div class="bg-[repeating-linear-gradient(45deg,#bfe6f5_0,#bfe6f5_3px,#dcf3fb_3px,#dcf3fb_6px)]"></div>
        <div class="bg-[repeating-linear-gradient(60deg,#aaa_0,#ddd_1px,#999_2px,#e6e6e6_3px)]"></div>
        <div class="bg-[radial-gradient(circle_at_60%_60%,#e6ecf7,#6d8ccb_70%)]"></div>
        <div class="grid grid-cols-3 gap-[2px] bg-[#9a9a9a] p-px"><div class="bg-[#5c5c5c]"></div><div class="bg-[#666]"></div><div class="bg-[#5e5e5e]"></div><div class="bg-[#666]"></div><div class="bg-[#565656]"></div><div class="bg-[#6a6a6a]"></div><div class="bg-[#5e5e5e]"></div><div class="bg-[#686868]"></div><div class="bg-[#5a5a5a]"></div></div>
        <div class="bg-[repeating-linear-gradient(90deg,#7fa58f_0,#b7cfc0_2px,#84a894_4px)]"></div>
        <div class="bg-[linear-gradient(135deg,#7a7a7a_50%,#c8c8c8_50%)]"></div>
      </div>
    </div>
  </section>

  <!-- red callout around the colour group -->
  <div class="absolute left-[668px] top-[155px] w-[124px] h-[75px] border-[3px] border-[#e53a35]"></div>

  <!-- layers window -->
  <section class="absolute left-[848px] top-[48px] w-[139px] h-[155px] bg-white flex flex-col shadow-[0_0_2px_rgba(0,0,0,.35)]">
    <div class="h-[14px] shrink-0 flex items-center justify-between pl-[4px] pr-[1px] text-[#aaa]"><span>图层</span><div class="w-[10px] h-[10px] bg-[#ececec]"></div></div>
    <div class="h-[25px] shrink-0 bg-[#f0f0f0] border-b border-[#777] flex flex-col">
      <div class="h-[15px] flex items-center pl-[2px] pr-[2px] gap-[1px] [&_svg]:w-[12px] [&_svg]:h-[12px]">
        <svg><use href="#plus"/></svg><svg><use href="#minus"/></svg><svg class="ml-auto"><use href="#detail"/></svg>
      </div>
      <div class="flex-1 flex items-center text-[#333] whitespace-nowrap">
        <span class="w-[97px] shrink-0 pl-[3px]">名称</span><span class="w-[25px] shrink-0 pl-[3px] border-l border-[#888]">可见</span><span class="shrink-0 pl-[2px] border-l border-[#888]">颜色</span>
      </div>
    </div>
    <div class="flex items-center h-[9px] mt-[1px] pl-[2px]">
      <span class="w-[6px] h-[6px] rounded-full border border-[#333] flex items-center justify-center"><b class="w-[3px] h-[3px] rounded-full bg-[#222]"></b></span>
      <span class="ml-[1px] w-[93px]">Layer0</span>
      <span class="w-[7px] h-[7px] border border-[#444] bg-white text-[6px] flex items-center justify-center">✓</span>
      <span class="ml-[15px] w-[9px] h-[8px] bg-[#e85a52]"></span>
    </div>
    <div class="flex items-center h-[9px] pl-[2px]">
      <span class="w-[6px] h-[6px] rounded-full border border-[#333]"></span>
      <span class="ml-[1px] w-[93px]">图层1</span>
      <span class="w-[7px] h-[7px] border border-[#444] bg-white text-[6px] flex items-center justify-center">✓</span>
      <span class="ml-[15px] w-[9px] h-[8px] bg-[#6b4b06]"></span>
    </div>
  </section>

  <!-- scenes window -->
  <section class="absolute left-[848px] top-[207px] w-[139px] h-[193px] bg-white flex flex-col shadow-[0_0_2px_rgba(0,0,0,.35)]">
    <div class="h-[15px] shrink-0 flex items-center justify-between pl-[4px] pr-[1px] text-[#aaa]"><span>场景</span><div class="w-[10px] h-[10px] bg-[#ececec]"></div></div>
    <div class="h-[16px] shrink-0 bg-[#f0f0f0] flex items-center pl-[1px] pr-[1px] gap-[1px] [&_svg]:w-[12px] [&_svg]:h-[12px]">
      <svg><use href="#refresh"/></svg><svg><use href="#plus"/></svg><svg><use href="#minus"/></svg>
      <svg class="ml-auto"><use href="#down"/></svg><svg><use href="#up"/></svg><svg><use href="#listview"/></svg>
      <b class="w-0 h-0 border-x-[2px] border-t-[3px] border-x-transparent border-t-[#111]"></b>
      <svg class="ml-[2px]"><use href="#monitor"/></svg><svg class="ml-[1px]"><use href="#detail"/></svg>
    </div>
    <div class="h-[108px] shrink-0 bg-white flex flex-col pt-[3px]">
      <div class="h-[34px] flex pl-[1px]">
        <svg class="w-[34px] h-[34px]" viewBox="0 0 34 34"><rect width="34" height="34" fill="#8fb78d"/><rect width="34" height="8" fill="#a5a5a5"/><rect y="8" width="34" height="6" fill="#a9daf5"/><rect x="0" y="32" width="34" height="2" fill="#a5a5a5"/><path d="M10 16h4v-4h3v8h6v3h-6v5h-4v-5h-3z" fill="#fff"/></svg>
        <div class="ml-[2px] flex flex-col gap-[1.500px] pt-[2px]"><b class="text-[#111]">场景号1</b><span>照片: <i class="text-[#888]">无</i></span><i class="text-[#777]">场景说明</i></div>
      </div>
      <div class="mt-[4px] h-[36px] flex pl-[1px] border-[1.500px] border-[#1478c8]">
        <svg class="w-[33px] h-[33px]" viewBox="0 0 34 34"><rect width="34" height="34" fill="#8fb78d"/><rect width="34" height="6" fill="#a5a5a5"/><rect y="29" width="34" height="5" fill="#a5a5a5"/><path d="M10 16h3v-3h3v3h8v2h-8v5h-6z" fill="#fff"/><path d="M26 32l6-6" stroke="#222" stroke-width="1.500"/></svg>
        <div class="ml-[2px] flex flex-col gap-[1.500px] pt-[2px]"><b class="text-[#111]">场景号2</b><span>照片: <i class="text-[#888]">无</i></span><i class="text-[#777]">场景说明</i></div>
      </div>
    </div>
    <div class="flex-1 bg-[#f0f0f0] border-t border-[#ccc] flex flex-col overflow-hidden">
      <div class="h-[13px] shrink-0 flex items-end pl-[37px] gap-[3px]"><span class="w-[6px] h-[6px] bg-white border border-[#777] text-[5px] flex items-center justify-center">✓</span><span>包含在动画中(I)</span></div>
      <div class="mt-[3px] h-[11px] shrink-0 flex items-center"><span class="w-[36px] text-right">名称:</span><div class="ml-px w-[78px] h-[9px] bg-white border-t border-[#999] pl-[1px] flex items-center">场景号2</div></div>
      <div class="mt-px h-[11px] shrink-0 flex items-center"><span class="w-[36px] text-right">说明:</span><div class="ml-px w-[78px] h-[9px] bg-white border-t border-[#999]"></div></div>
      <div class="flex shrink-0"><span class="w-[30px] text-right leading-[8px]">要保存的<br>属性:</span><span class="ml-px w-[7px]"></span><div class="flex items-center gap-[3px] h-[8px] mt-[1px]"><span class="w-[6px] h-[6px] bg-white border border-[#777] text-[5px] flex items-center justify-center">✓</span><span>相机位置</span></div></div>
    </div>
  </section>

  <!-- watermark -->
  <div class="absolute left-[755px] top-[400px] w-[245px] h-[122px] bg-white flex items-start">
    <svg class="w-[70px] h-[56px] mt-[33px] ml-[20px] shrink-0" viewBox="775 433 70 56">
      <path d="M782 456C790 440 808 433 824 436C835 438 843 447 840 460C838 449 828 442 815 441C802 440 790 446 782 456Z" fill="#86bf3a"/>
      <rect x="797" y="443" width="11" height="33" fill="#3f7fbe"/>
      <path d="M808 443L820 448V455H815V474H808Z" fill="#d5d9de"/>
      <rect x="815" y="455" width="8" height="18" fill="#1f4f9f"/>
      <path d="M825 455L835 460V464L825 470Z" fill="#d5d9de"/>
      <rect x="783" y="462" width="9" height="11" fill="#1f4f9f"/>
      <path d="M778 466C777 480 792 486 804 485C822 484 838 472 842 456C833 470 818 477 803 478C792 478 784 474 783 462Z" fill="#1d4fa6"/>
    </svg>
    <div class="-ml-[2px] mt-[43px] flex flex-col">
      <span class="text-[27px] leading-[25px] font-black text-[#171717] scale-y-[0.85] font-['Noto_Sans_CJK_SC',sans-serif]">土木工程网</span>
      <span class="mt-[4px] text-[16px] leading-[13px] font-semibold tracking-[0.3px] text-[#2a2a2a] font-['Open_Sans',sans-serif]">www.civilcn.com</span>
    </div>
  </div>
</div>
</body>
</html>
